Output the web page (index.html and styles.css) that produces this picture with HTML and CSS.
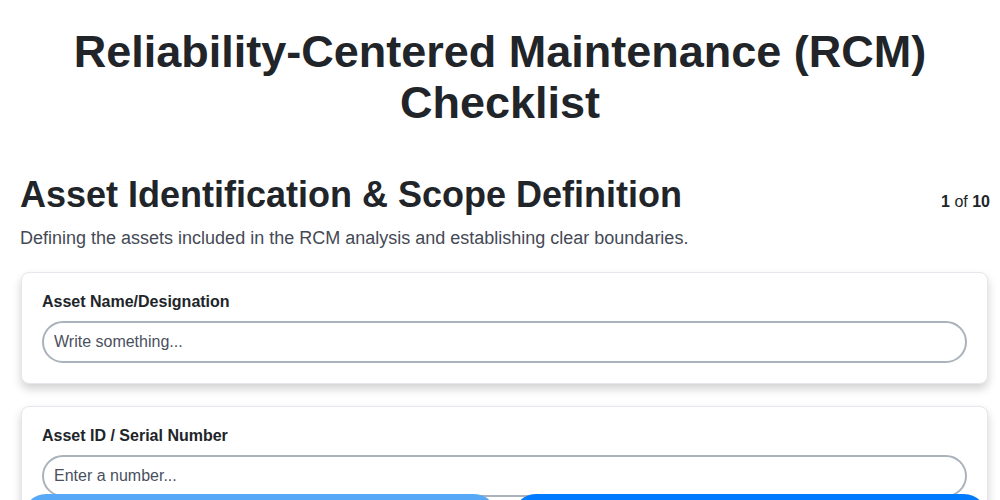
FILE: index.html
```html
<!DOCTYPE html>
<html lang="en">
<head>
  <meta charset="UTF-8">
  <title>RCM Checklist</title>
  <link rel="stylesheet" href="styles.css">
</head>

<body>
  <h1 class="title">Reliability-Centered Maintenance (RCM) Checklist</h1>

  <div class="step">
    <div class="step-head">
      <h2>Asset Identification &amp; Scope Definition</h2>
      <span class="count"><b>1</b> of <b>10</b></span>
    </div>
    <p class="desc">Defining the assets included in the RCM analysis and establishing clear boundaries.</p>

    <div class="card">
      <label for="name">Asset Name/Designation</label>
      <input id="name" type="text" placeholder="Write something...">
    </div>

    <div class="card">
      <label for="serial">Asset ID / Serial Number</label>
      <input id="serial" type="text" placeholder="Enter a number...">
    </div>
  </div>

  <div class="nav">
    <button class="btn prev">Previous</button>
    <button class="btn next">Next</button>
  </div>
</body>

</html>
```

FILE: styles.css
```css
* {
  margin: 0;
  padding: 0;
  box-sizing: border-box;
}

body {
  font-family: "Liberation Sans", Arial, sans-serif;
  color: #212529;
  background: #fff;
  padding: 26px 10px 0;
}

.title {
  font-size: 45px;
  line-height: 51px;
  text-align: center;
  margin-bottom: 42px;
}

.step {
  padding-left: 10px;
}

.step-head {
  display: flex;
  justify-content: space-between;
  align-items: baseline;
}

.step-head h2 {
  font-size: 36px;
  line-height: 50px;
}

.count {
  font-size: 16px;
}

.desc {
  font-size: 18px;
  color: #444a55;
  margin: 8px 0 23px;
}

.card {
  margin: 0 2px 22px 1px;
  padding: 20px;
  border: 1px solid #e6e6ec;
  border-radius: 8px;
  box-shadow: 0 5px 10px rgba(0, 0, 0, 0.18);
  background: #fff;
}

.card label {
  display: block;
  font-size: 16px;
  font-weight: bold;
  margin-bottom: 10px;
}

.card input {
  width: 100%;
  height: 42px;
  padding: 0 10px;
  border: 2px solid #aab2bb;
  border-radius: 21px;
  font-family: inherit;
  font-size: 16px;
  color: #212529;
  outline: none;
}

.card input::placeholder {
  color: #4a5060;
}

.nav {
  position: fixed;
  left: 23px;
  right: 13px;
  bottom: -40px;
  display: flex;
  gap: 16px;
}

.btn {
  flex: 1;
  height: 46px;
  border: none;
  border-radius: 23px;
  color: #fff;
  font-size: 16px;
  background: #007bff;
}

.btn.prev {
  background: #58a8f8;
}
```
